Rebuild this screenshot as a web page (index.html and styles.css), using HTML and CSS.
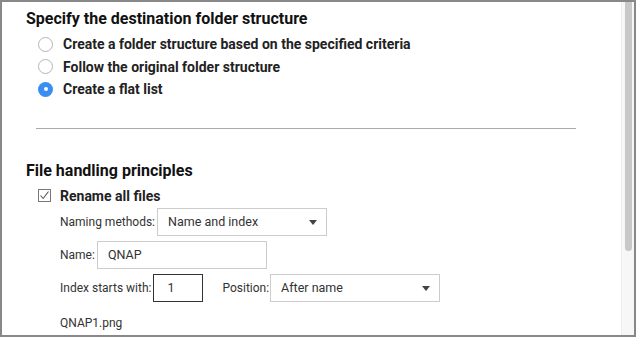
FILE: index.html
```html
<!DOCTYPE html>
<html lang="en">

<head>
  <title>Destination folder settings</title>
  <link rel="stylesheet" href="styles.css">
</head>

<body>
  <div class="frame">
    <div class="content">
      <h2 class="section-title">Specify the destination folder structure</h2>
      <div class="radio-list">
        <label class="radio-row"><span class="radio"></span>Create a folder structure based on the specified criteria</label>
        <label class="radio-row"><span class="radio"></span>Follow the original folder structure</label>
        <label class="radio-row"><span class="radio checked"></span>Create a flat list</label>
      </div>

      <hr class="divider">

      <h2 class="section-title">File handling principles</h2>
      <label class="check-row">
        <svg class="checkbox" width="13" height="13" viewBox="0 0 13 13">
          <rect x="0.5" y="0.5" width="12" height="12" fill="none" stroke="#777" />
          <path d="M2.5 6.5 L5.2 9.5 L10.5 2.5" fill="none" stroke="#555" stroke-width="1.1" />
        </svg>
        Rename all files
      </label>

      <div class="options">
        <div class="field-row">
          <span class="field-label">Naming methods:</span>
          <div class="select wide">Name and index<span class="arrow"></span></div>
        </div>
        <div class="field-row">
          <span class="field-label">Name:</span>
          <div class="text-input wide">QNAP</div>
        </div>
        <div class="field-row">
          <span class="field-label">Index starts with:</span>
          <div class="text-input small">1</div>
          <span class="field-label position">Position:</span>
          <div class="select wide">After name<span class="arrow"></span></div>
        </div>
        <div class="preview">QNAP1.png</div>
      </div>
    </div>
    <div class="scrollbar"><div class="thumb"></div></div>
  </div>
</body>

</html>
```

FILE: styles.css
```css
body {
  margin: 0;
  font-family: Roboto, 'Liberation Sans', Arial, sans-serif;
  color: #222;
  background: #fff;
}

.frame {
  box-sizing: border-box;
  width: 636px;
  height: 337px;
  border: 2px solid #888;
  display: flex;
  overflow: hidden;
}

.content {
  flex: 1;
  padding: 7px 0 0 24px;
}

.section-title {
  margin: 0;
  font-size: 16px;
  font-weight: 700;
  line-height: 20px;
  color: #111;
}

.radio-list {
  margin-top: 4px;
  padding-left: 12px;
}

.radio-row {
  display: flex;
  align-items: center;
  height: 22.5px;
  font-size: 14px;
  font-weight: 700;
  color: #222;
}

.radio {
  box-sizing: border-box;
  width: 15px;
  height: 15px;
  border: 1px solid #b5b5b5;
  border-radius: 50%;
  margin-right: 10px;
  position: relative;
}

.radio.checked {
  border: none;
  background: #3a8ef2;
}

.radio.checked::after {
  content: '';
  position: absolute;
  left: 5.5px;
  top: 5.5px;
  width: 4px;
  height: 4px;
  border-radius: 50%;
  background: #fff;
}

.divider {
  border: none;
  border-top: 1px solid #aaa;
  margin: 27px 0 0 10px;
  width: 540px;
}

.divider + .section-title {
  margin-top: 32px;
}

.check-row {
  display: flex;
  align-items: center;
  margin-top: 7px;
  padding-left: 12px;
  font-size: 14px;
  font-weight: 700;
  color: #222;
}

.checkbox {
  margin-right: 9px;
}

.options {
  padding-left: 34px;
  font-size: 12px;
  color: #333;
}

.field-row {
  display: flex;
  align-items: center;
  margin-top: 5px;
}

.options .field-row:first-child {
  margin-top: 4px;
}

.field-label {
  margin-right: 2px;
}

.field-label.position {
  margin-left: 19px;
  margin-right: 1px;
}

.select,
.text-input {
  box-sizing: border-box;
  height: 28px;
  border: 1px solid #ccc;
  display: flex;
  align-items: center;
  padding-left: 10px;
  position: relative;
  font-size: 12.5px;
}

.wide {
  width: 170px;
}

.text-input.small {
  width: 50px;
  border-color: #333;
  padding-left: 13px;
}

.arrow {
  position: absolute;
  right: 9px;
  top: 11px;
  border-left: 4px solid transparent;
  border-right: 4px solid transparent;
  border-top: 5px solid #444;
}

.preview {
  margin-top: 14px;
}

.scrollbar {
  box-sizing: border-box;
  width: 13px;
  background: #f7f7f7;
  border-left: 1px solid #eee;
  padding-left: 3px;
}

.thumb {
  width: 7px;
  height: 249px;
  background: #c8c8c8;
  border-radius: 0 0 4px 4px;
}
```
